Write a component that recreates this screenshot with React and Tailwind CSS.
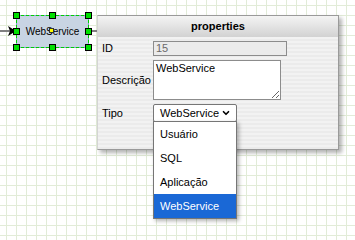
import { ChevronDown } from 'lucide-react';

const Handle = ({ x, y }) => (
	<div
		className="absolute w-[7px] h-[7px] bg-[#00e000] border border-black"
		style={{ left: x - 3, top: y - 3 }}
	/>
);

const Node = () => {
	const handles = [
		[16, 15], [52, 15], [88, 15],
		[16, 31], [88, 31],
		[16, 47], [52, 47], [88, 47],
	];
	return (
		<>
			{/* incoming edge */}
			<div className="absolute left-0 top-[30px] w-[10px] h-[2px] bg-[#808080]" />
			<svg className="absolute left-[8px] top-[26px]" width="8" height="10" viewBox="0 0 8 10">
				<path d="M0 0 L8 5 L0 10 L2 5 Z" fill="#000" />
			</svg>
			{/* outgoing edge, runs under the panel */}
			<div className="absolute left-[91px] top-[30px] w-[10px] h-[2px] bg-[#808080]" />

			<div className="absolute left-[16px] top-[15px] w-[73px] h-[33px] bg-[#c8d4e3] border border-[#7d9cc8] flex items-center justify-center">
				<div className="absolute inset-[-1px] border border-dashed border-[#00d000]" />
				<span className="text-[10px] text-black leading-none">WebService</span>
			</div>
			{handles.map(([x, y]) => (
				<Handle key={`${x}-${y}`} x={x} y={y} />
			))}
			<div className="absolute left-[49px] top-[28px] w-[5px] h-[5px] bg-[#ffff00] border border-[#333]" />
		</>
	);
};

const options = ['Usuário', 'SQL', 'Aplicação', 'WebService'];

const Properties = () => (
	<div className="absolute left-[97px] top-[15px] w-[242px] h-[135px] border border-[#9a9a9a] border-l-[#d4d4d4] shadow-[3px_3px_4px_rgba(0,0,0,0.3)] flex flex-col">
		<div className="h-[21px] bg-[linear-gradient(to_bottom,#f4f4f4,#d2d2d2)] flex items-center justify-center">
			<span className="text-[11px] font-bold text-black">properties</span>
		</div>
		<div className="flex-1 bg-[repeating-linear-gradient(to_bottom,#f2f2f2_0px,#f2f2f2_2px,#ebebeb_2px,#ebebeb_4px)] pl-[4px] pt-[4px]">
			<div className="grid grid-cols-[51px_auto] gap-y-[4px] items-center text-[11px] leading-[13px] text-black">
				<span>ID</span>
				<div className="w-[134px] h-[15px] bg-[#ebebeb] border border-[#8c8c8c] pl-[2px] text-[#6a6a6a] leading-[13px]">15</div>

				<span>Descrição</span>
				<textarea
					readOnly
					defaultValue="WebService"
					className="w-[128px] h-[40px] bg-white border border-[#8c8c8c] px-[2px] py-[1px] text-[11px] leading-[13px] text-black outline-none"
					style={{ fontFamily: '"Liberation Sans", Arial, sans-serif' }}
				/>

				<span>Tipo</span>
				<div className="relative w-[84px]">
					<div className="h-[18px] bg-white border border-[#767676] rounded-[2px] flex items-center justify-between pl-[6px] pr-[5px]">
						<span>WebService</span>
						<ChevronDown size={10} strokeWidth={4} />
					</div>
					<div className="absolute left-0 top-[17px] w-[84px] bg-white border border-[#767676] shadow-[2px_2px_4px_rgba(0,0,0,0.3)] z-10">
						{options.map((opt) => (
							<div
								key={opt}
								className={`h-[24px] flex items-center pl-[6px] ${
									opt === 'WebService' ? 'bg-[#1a68d6] text-white' : 'text-black'
								}`}
							>
								{opt}
							</div>
						))}
					</div>
				</div>
			</div>
		</div>
	</div>
);

const App = () => (
	<div
		className="relative w-[355px] h-[240px] overflow-hidden bg-white bg-[linear-gradient(to_right,#e2ecd8_1px,transparent_1px),linear-gradient(to_bottom,#e2ecd8_1px,transparent_1px)] bg-size-[10px_10px] bg-position-[6px_5px]"
		style={{ fontFamily: '"Liberation Sans", Arial, sans-serif' }}
	>
		<Node />
		<Properties />
	</div>
);

export default App;
